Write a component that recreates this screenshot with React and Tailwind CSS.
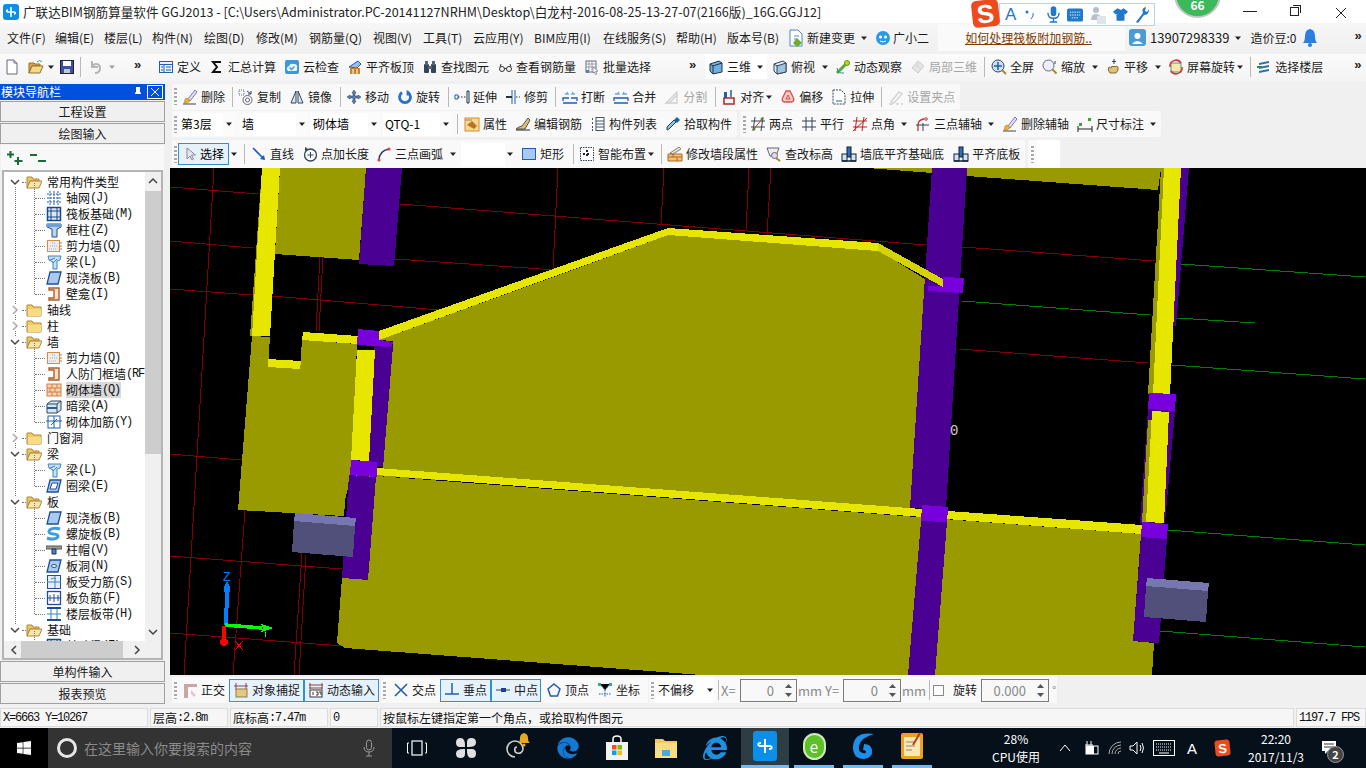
import { FaEdge, FaInternetExplorer, FaWindows } from 'react-icons/fa';

const B = '#1f5fae';
const LB = '#6aa5e0';
const O = '#d0762a';

const brush = <><path d="M6 10l7-9 2 2-7 9z" fill="#e4e0f0" stroke="#65a" strokeWidth=".8" /><path d="M3 10q2-2 4 0l1 2q-3 3-6 2z" fill="#e6b23c" stroke="#a8801e" strokeWidth=".5" /><path d="M1 15h13" stroke="#444" /></>;

const icons = {
  new: <><path d="M3 1h7l3 3v11H3z" fill="#fff" stroke="#667" /><path d="M10 1v3h3" fill="#dde" stroke="#667" /></>,
  open: <><path d="M1 4h5l1 1h5v2H4l-3 7z" fill="#d9a441" stroke="#96702a" /><path d="M4 7h11l-3 7H1z" fill="#f5d98a" stroke="#96702a" /><path d="M9 3q3-3 5 0" fill="none" stroke="#3a7" /></>,
  save: <><rect x="1.500" y="1.500" width="13" height="13" fill="#3f4fa8" stroke="#223" /><rect x="4" y="2" width="8" height="5" fill="#fff" /><rect x="5" y="10" width="6" height="4" fill="#bcc" /></>,
  undo: <path d="M5 2v6h6M5 8c3-5 8-3 8 1 0 3-2 5-5 5" fill="none" stroke="#b5b5b5" strokeWidth="2" />,
  define: <><rect x="1.500" y="2.500" width="13" height="11" fill="#eaf2fb" stroke={B} /><path d="M1.500 5.500h13M6 5.500v8M3 8h2M3 11h2M8 8h5M8 11h5" stroke={B} /></>,
  sigma: <path d="M12 3H4l4 5-4 5h8" fill="none" stroke="#111" strokeWidth="2" />,
  cloud: <><rect x="1" y="1" width="14" height="14" rx="2" fill="#3c97e0" /><path d="M4 12q-3-3 1-5 1-3 5-2 4 0 3 4 1 3-2 3z" fill="#e8f4fc" /><path d="M5.500 8.500l2 2 3-3" fill="none" stroke="#3c97e0" strokeWidth="1.300" /></>,
  level: <><path d="M2 8l9-6 3 3-4 4z" fill="#9cbedd" stroke={B} /><rect x="3" y="9" width="10" height="6" fill="#c9832e" /><path d="M6 10v5M10 10v5" stroke="#fff" /></>,
  find: <><rect x="2" y="5" width="5" height="9" rx="1" fill="#345" /><rect x="9" y="5" width="5" height="9" rx="1" fill="#345" /><rect x="3" y="2" width="3" height="4" fill="#567" /><rect x="10" y="2" width="3" height="4" fill="#567" /><rect x="6" y="7" width="4" height="3" fill="#567" /></>,
  glasses: <><circle cx="5" cy="10" r="2.500" fill="none" stroke="#333" /><circle cx="12" cy="10" r="2.500" fill="none" stroke="#333" /><path d="M7 9.500h2.500M3 8l1-3M14 8l-1-3" stroke="#333" /></>,
  batch: <><rect x="2" y="2" width="10" height="11" fill="#fff" stroke="#667" /><path d="M2 5h10M2 8h10M5 2v11M8 2v11" stroke="#99a" /><path d="M9 8l5 4-2.500.5L13 15l-1.500.5-1-2.500L9 14z" fill="#fff" stroke="#667" strokeWidth=".6" /><rect x="2" y="11" width="3" height="3" fill="#4a7fc0" /></>,
  cube: <><path d="M2 5l9-3 3 2v9l-9 2-3-3z" fill="#6fb0e0" stroke="#234" /><path d="M2 5l3 2 9-3M5 7v8" fill="none" stroke="#234" /></>,
  top: <><path d="M2 5l9-3 3 2v9l-9 2-3-3z" fill="#dcebf7" stroke="#345" /><path d="M5 7l9-3v9l-9 2z" fill="#9cc3e4" stroke="#345" /><path d="M2 5l3 2" stroke="#345" /></>,
  orbit: <><path d="M2 14L12 4" stroke="#5a3" strokeWidth="3" /><circle cx="12" cy="4" r="2.500" fill="#cc3" stroke="#690" /><path d="M2 9q1 6 7 5" fill="none" stroke="#38a" /></>,
  local3d: <><path d="M2 9l6-7 6 5-6 7z" fill="#ddd" stroke="#bbb" /><path d="M5 5l6 5M8 2v6" stroke="#c8c8c8" /></>,
  full: <><circle cx="7" cy="7" r="6" fill="#cfe0f3" stroke="#345" /><path d="M7 3v8M3 7h8" stroke={B} strokeWidth="1.500" /><path d="M11 11l4 4" stroke="#a82" strokeWidth="2" /></>,
  zoom: <><circle cx="6.500" cy="6.500" r="5.500" fill="#eef" stroke="#667" /><path d="M10.500 10.500l4 4" stroke="#a82" strokeWidth="2" /><path d="M13 2v3" stroke="#345" /></>,
  pan: <><path d="M4 8q-2 3 1 6h6q3-3 2-6l-2-1-1 1-1-1-1 1-1-1-1 2z" fill="#dfc07e" stroke="#8a6a2a" /><path d="M9 0v5M7 2.500h4" stroke="#345" /></>,
  rotScreen: <><rect x="3" y="4" width="10" height="9" fill="#f5e9a8" stroke="#49a" /><path d="M2 8a6 6 0 0 1 11-4M14 8a6 6 0 0 1-11 4" fill="none" stroke="#d33" strokeWidth="1.500" /></>,
  floor: <><path d="M3 4l10-2v2L3 6zM3 8l10-2v2L3 10zM3 12l10-2v2L3 14z" fill="#2a6fa8" /><path d="M1 8h5" stroke="#2a8a4a" strokeWidth="2" /></>,
  del: brush,
  copy: <><rect x="1" y="1" width="5" height="5" fill="none" stroke="#667" strokeDasharray="1 1" /><circle cx="9.500" cy="11" r="4.500" fill="none" stroke="#667" /><circle cx="9.500" cy="11" r="2" fill="none" stroke="#667" /><path d="M9 2l4 3M13 2v3h-3" fill="none" stroke="#345" /></>,
  mirror: <path d="M7 2v12H2zM9 2v12h5z" fill="#dce8f5" stroke="#345" />,
  move: <path d="M8 1l2 3H9v3h3V6l3 2-3 2V9H9v3h1l-2 3-2-3h1V9H4v1L1 8l3-2v1h3V4H6z" fill="#5580b0" stroke="#234" strokeWidth=".5" />,
  rotate: <path d="M5 3.500a5.500 5.500 0 1 0 6 0v3" fill="none" stroke="#2d6fc0" strokeWidth="2.800" />,
  extend: <><path d="M13 2h2v12h-2z" fill="none" stroke="#234" /><path d="M1 6h3v4H1z" fill="none" stroke={B} /><path d="M4 8h8" stroke="#234" strokeDasharray="1.500 1.500" /></>,
  trim: <><path d="M7 1v14M10 1v14" stroke={B} /><path d="M1 8h6" stroke="#234" strokeWidth="2" /><path d="M11 8h4" stroke="#234" strokeDasharray="1.500 1.500" /></>,
  break: <><path d="M1 12V9h6M15 12V9H9M1 14h14" fill="none" stroke={B} strokeWidth="1.300" /><path d="M3 5h3l-1-2M13 5h-3l1-2" fill="none" stroke={LB} strokeWidth="1.300" /></>,
  merge: <><path d="M1 12V9h14v3M1 14h14" fill="none" stroke={B} strokeWidth="1.300" /><path d="M2 5h4l-1-2M14 5h-4l1-2" fill="none" stroke={LB} strokeWidth="1.300" /></>,
  split: <path d="M2 14L13 3v11zM5 14l8-8" fill="none" stroke="#bdbdbd" strokeWidth="1.300" />,
  align: <><rect x="3" y="9" width="10" height="6" fill="none" stroke="#b22" strokeWidth="1.500" /><rect x="3" y="3" width="3" height="6" fill={B} /><path d="M10 1v7" stroke={B} strokeWidth="1.500" /></>,
  offset: <><path d="M4 13q-3-1-1-5l3-6h4l3 6q2 4-1 5z" fill="#f4c6c0" stroke="#c55" strokeWidth="1.300" /><path d="M6 10l2-4 2 4z" fill="none" stroke="#c55" /></>,
  stretch: <><path d="M2 1h8l4 4v10H2z" fill="#fff" stroke="#345" strokeDasharray="2 1" /><path d="M5 12h6" stroke={B} /></>,
  setgrip: <path d="M3 13L11 3l3 2-8 9zM1 15h4M8 15h3M13 15h2" fill="none" stroke="#c4c4c4" strokeWidth="1.400" />,
  prop: <><rect x="1" y="2" width="14" height="13" fill="#f7d98c" stroke="#d98a30" /><path d="M3 9l5-4 5 5-3 3z" fill="#b5762a" /><path d="M1 4h7" stroke="#888" /></>,
  editbar: <><path d="M1 13h9l5-9-2-2-6 8-3 1z" fill="#e0c070" stroke="#555" /><path d="M1 14h14" stroke="#222" /></>,
  list: <><path d="M2 3h2M2 7h2M2 11h2M2 14h2" stroke="#456" strokeDasharray="1 1" strokeWidth="2" /><rect x="6" y="1.500" width="8" height="13" fill="#fff" stroke="#456" /><path d="M6 5h8M6 8h8M6 11h8" stroke="#456" /></>,
  pick: <><path d="M2 14l2-1 7-7-2-2-7 7z" fill="#8cc0ee" stroke="#245" /><path d="M9 4l3-3 3 3-3 3z" fill="#1f5fae" /></>,
  two: <><path d="M5 1L3 15M13 1l-2 14M1 5h14M1 11h14" stroke="#345" /><circle cx="4" cy="13" r="1.500" fill="#3a3" /><circle cx="12" cy="3" r="1.500" fill="#3a3" /><path d="M3 14L13 2" stroke="#b33" /></>,
  parallel: <path d="M5 1v14M11 1v14M1 5h14M1 11h14" stroke="#345" />,
  angle: <path d="M5 1L3 15M12 1l-2 14M1 5h14M1 11h14M1 15L15 2" stroke="#b22" />,
  arc3: <><path d="M3 15V9q0-5 6-6" fill="none" stroke="#c33" strokeWidth="1.300" /><path d="M1 9h13M8 7v8" stroke="#345" /><circle cx="11" cy="3" r="1.300" fill="none" stroke="#c33" /></>,
  delaxis: brush,
  dim: <><path d="M1 13h14M1 10v6M15 10v6" stroke="#222" /><rect x="11" y="2" width="3" height="3" fill="#3a3" /><rect x="2" y="7" width="3" height="3" fill="#3a3" /></>,
  select: <path d="M5 2v11l3-3 2 4 1.500-1-2-4h4z" fill="#e8e8f2" stroke="#889" />,
  line: <><path d="M2 2l11 11" stroke={B} strokeWidth="1.600" /><path d="M14 14l-5-1 4-4z" fill={B} /></>,
  pointlen: <><circle cx="8.500" cy="9" r="6" fill="none" stroke="#345" strokeWidth="1.300" /><path d="M8.500 6v6M5.500 9h6" stroke="#345" /><path d="M3 1l3 2-3 2z" fill="#345" /></>,
  arc: <><path d="M3 14q0-9 10-11" fill="none" stroke="#336" strokeWidth="1.300" /><circle cx="3" cy="14" r="1.600" fill="#d44" /><circle cx="13" cy="3" r="1.600" fill="#d44" /></>,
  rect: <rect x="1.500" y="2.500" width="13" height="11" fill="#a9c9f0" stroke={B} />,
  smart: <><rect x="1.500" y="1.500" width="13" height="13" fill="#fff" stroke="#345" strokeDasharray="1.500 1" /><path d="M8 4v8M4 8h8" stroke="#222" strokeWidth="2" strokeDasharray="2 2" /></>,
  brick: <><path d="M1 15V8h14v7z" fill="#f2c078" stroke="#b5651d" /><path d="M1 11h14M6 8v3M10 11v4" stroke="#b5651d" /><path d="M3 7l9-6 2 2-8 5z" fill="#e8e0c8" stroke="#555" strokeWidth=".7" /></>,
  elev: <><path d="M1 2h12l-3 8H4z" fill="#eee" stroke="#667" /><path d="M10 12l4 3" stroke="#a82" strokeWidth="2" /><circle cx="8.500" cy="9.500" r="3" fill="#dde" stroke="#667" /></>,
  wallbase: <><rect x="6" y="1" width="4" height="10" fill="#2f6fc0" stroke="#123" /><rect x="1" y="8" width="5" height="7" fill="#cfe2f6" stroke="#123" /><rect x="10" y="8" width="5" height="7" fill="#cfe2f6" stroke="#123" /><path d="M1 15h14" stroke="#123" strokeWidth="1.500" /></>,
  ortho: <><path d="M2 2h13v3H6v11H2z" fill="#c9a5a5" /><path d="M9 8l5 5-2 2-3-3z" fill="#e4c8d0" /></>,
  snap: <><path d="M3 1v7M13 1v7M1 4h14" stroke="#845" /><rect x="3" y="7" width="11" height="8" fill="#e2c985" stroke="#9a7a3a" /></>,
  dyn: <><path d="M1 3h14M1 6h14M2 1v6M14 1v6" stroke="#844" /><rect x="2" y="8" width="12" height="7" fill="#fff" stroke="#333" /><path d="M5 10v3M8 10h2v3H8M11 10h2v3" stroke="#333" fill="none" /></>,
  cross: <path d="M2 2l12 12M14 2L2 14" stroke={B} strokeWidth="1.600" />,
  perp: <path d="M1 12h14M8 1v11" stroke={B} strokeWidth="1.500" />,
  mid: <><path d="M1 8h14" stroke="#345" /><rect x="6" y="6" width="5" height="4" fill="#1f3f9e" /></>,
  vertex: <path d="M8 2l6 5-2.500 7h-7L2 7z" fill="none" stroke={B} strokeWidth="1.500" />,
  coord: <><path d="M3 2l5 6 5-6M8 8v7M2 12h12" stroke={B} strokeDasharray="1.500 1" /><rect x="1" y="1" width="3" height="3" fill="#3a8" /><rect x="12" y="1" width="3" height="3" fill="#3a8" /></>,
  folder: <><path d="M1 3h5l1 2h8v9H1z" fill="#f4cf5f" stroke="#a98a3e" /><path d="M2 7h13v7H2z" fill="#f7dc84" /></>,
  folderOpen: <><path d="M1 3h5l1 2h6v2H4l-3 7z" fill="#e9c469" stroke="#a98a3e" /><path d="M4 7h12l-3 7H1z" fill="#f7e3a6" stroke="#a98a3e" /></>,
  grid: <path d="M1 4h14M1 8h14M1 12h14M4 1v14M8 1v14M12 1v14" stroke={B} strokeDasharray="2 1" />,
  raft: <><rect x="1.500" y="1.500" width="13" height="13" fill="#dbe9f7" stroke="#154a8c" strokeWidth="1.500" /><path d="M5 2v12M11 2v12M2 5h12M2 11h12" stroke="#154a8c" /></>,
  column: <><path d="M1 2h14v3l-4 2v8H6V7L1 5z" fill="#bcd4ef" stroke="#1e4f96" /><path d="M1 2h14v3H1z" fill="#6d9fd8" /></>,
  shear: <><rect x="1.500" y="2.500" width="12" height="11" fill="#ededed" stroke="#d88a4a" /><path d="M3 11h8M4 8h7M6 5h4" stroke="#aaa" strokeDasharray="1 1" /><path d="M14 5h2M14 8h2M14 11h2" stroke={O} /></>,
  beam: <><path d="M2 2h13l-1 4-3 1v8H7V8L3 6z" fill="#c7e0f5" stroke="#3a86c0" /><path d="M4 6l5-2M7 9l4-4" stroke="#3a86c0" /></>,
  slab: <path d="M4 2h11l-3 12H1z" fill="#a9c9f0" stroke="#1e4f96" strokeWidth="1.300" />,
  niche: <path d="M3 2h10v12H3v-2h5V4H3z" fill="#f6ddc8" stroke="#b0602a" strokeWidth="1.400" />,
  masonry: <><rect x="1" y="2" width="14" height="12" fill="#f6d4b4" stroke="#cf7f45" /><path d="M1 6h14M1 10h14M6 2v4M11 2v4M4 6v4M9 6v4M6 10v4M11 10v4" stroke="#cf7f45" /></>,
  hidden: <><path d="M1 6l4-3h10v9l-4 3H1z" fill="#d7e6f3" stroke="#345" /><path d="M1 6h10v9M11 6l4-3" fill="none" stroke="#345" /><rect x="1" y="9" width="10" height="2" fill="#2a5ea0" /></>,
  rebar: <><rect x="2" y="2" width="12" height="12" fill="#fff" stroke={B} /><path d="M0 7h16M8 2v12M5 11l6-6" stroke={B} /></>,
  ring: <><path d="M4 2h11l-3 12H1z" fill="#a9c9f0" stroke="#1e4f96" strokeWidth="1.300" /><path d="M6 5h6l-2 6H4z" fill="#fff" stroke="#1e4f96" /></>,
  spiral: <path d="M14 3C8 1 3 3 3 6s9 1 9 4-6 4-11 2" fill="none" stroke="#3d9be0" strokeWidth="3" />,
  cap: <><path d="M0 4h16v3H0z" fill="#999" stroke="#555" /><path d="M6 7h4v5H6z" fill="#4a86c6" stroke="#234" /></>,
  hole: <><path d="M4 2h11l-3 12H1z" fill="#a9c9f0" stroke="#1e4f96" strokeWidth="1.300" /><ellipse cx="8" cy="8" rx="2.500" ry="1.500" fill="#fff" stroke="#1e4f96" /></>,
  force: <><rect x="1.500" y="1.500" width="13" height="13" fill="#e3eefa" stroke="#1e4f96" /><path d="M1 8h14M9 2v12" stroke="#3a86c0" /><path d="M5 5q3-2 5 0" fill="none" stroke="#3a86c0" /></>,
  neg: <><rect x="1.500" y="1.500" width="13" height="13" fill="#fff" stroke="#1e4f96" strokeWidth="1.300" /><path d="M2 8h12M8 4v8M4 5v6M12 5v6" stroke="#1e4f96" /></>,
  band: <><path d="M1 2h14M1 14h14" stroke="#1e4f96" strokeWidth="2" /><path d="M5 3v10M11 3v10M1 8h14" stroke="#3a86c0" /></>,
};

function Icon({ name, cls = '' }) {
  return <svg width="16" height="16" viewBox="0 0 16 16" className={`shrink-0 ${cls}`}>{icons[name]}</svg>;
}

function Tool({ icon, label, cls = '', off = false }) {
  return (
    <div className={`flex items-center shrink-0 whitespace-nowrap ${off ? 'text-[#a6a6a6]' : 'text-[#1a1a1a]'} ${cls}`}>
      <Icon name={icon} cls={off ? 'opacity-70' : ''} />
      <span className="ml-[3px]">{label}</span>
    </div>
  );
}

function Caret({ cls = '' }) {
  return (
    <svg width="8" height="8" viewBox="0 0 8 8" className={`shrink-0 ${cls}`}>
      <path d="M1 2.500h6L4 6z" fill="#222" />
    </svg>
  );
}

const Sep = ({ cls = '' }) => <div className={`w-px h-[20px] bg-[#b9b9b9] shrink-0 ${cls}`} />;

const Grip = ({ cls = '' }) => (
  <div className={`w-[3px] h-[17px] shrink-0 bg-[repeating-linear-gradient(#a8a8a8_0_2px,transparent_2px_4px)] ${cls}`} />
);

const More = ({ cls = '' }) => <span className={`text-[13px] leading-none font-bold text-[#222] shrink-0 font-['Liberation_Sans',sans-serif] ${cls}`}>»</span>;

function Combo({ text, w, cls = '' }) {
  return (
    <div className={`flex items-center shrink-0 ${cls}`}>
      <div className={`h-[23px] bg-white flex items-center pl-[2px] whitespace-nowrap ${w}`}>{text}</div>
      <div className="w-[12px] h-[23px] bg-[#fbfbfb] flex items-center justify-center"><Caret /></div>
    </div>
  );
}

const menus = [
  ['文件(F)', 'w-[48px]'], ['编辑(E)', 'w-[49px]'], ['楼层(L)', 'w-[48px]'], ['构件(N)', 'w-[52px]'],
  ['绘图(D)', 'w-[52px]'], ['修改(M)', 'w-[53px]'], ['钢筋量(Q)', 'w-[64px]'], ['视图(V)', 'w-[50px]'],
  ['工具(T)', 'w-[50px]'], ['云应用(Y)', 'w-[61px]'], ['BIM应用(I)', 'w-[69px]'], ['在线服务(S)', 'w-[73px]'],
  ['帮助(H)', 'w-[51px]'], ['版本号(B)', 'w-[61px]'],
];

function TitleBar() {
  return (
    <div className="h-[23px] bg-white flex items-center relative shrink-0">
      <div className="ml-[3px] w-[16px] h-[16px] rounded-[3px] bg-[#0b8fe8] flex items-center justify-center">
        <svg width="12" height="12" viewBox="0 0 12 12"><path d="M6 1v10M2 6h8M2 6q-1-2 1-2M10 6q1 2-1 2" fill="none" stroke="#fff" strokeWidth="1.600" /></svg>
      </div>
      <span className="ml-[4px] text-[12.6px] leading-none whitespace-nowrap text-[#222] mt-[1px]">
        广联达BIM钢筋算量软件 GGJ2013 - [C:\Users\Administrator.PC-20141127NRHM\Desktop\白龙村-2016-08-25-13-27-07(2166版)_16G.GGJ12]
      </span>
      <div className="absolute left-[1243px] top-[11px] w-[14px] h-px bg-[#222]" />
      <div className="absolute left-[1290px] top-[7px] w-[9px] h-[9px] border border-[#222] bg-white">
        <div className="absolute -top-[3px] left-[2px] w-[8px] h-[8px] border-t border-r border-[#222]" />
      </div>
      <svg width="12" height="12" viewBox="0 0 12 12" className="absolute left-[1335px] top-[7px]"><path d="M1 1l10 10M11 1L1 11" stroke="#222" /></svg>
    </div>
  );
}

function MenuBar() {
  return (
    <div className="h-[31px] pb-[2px] bg-gradient-to-b from-[#f6f6f6] to-[#f0f0f0] flex items-center pl-[7px] text-[12px] leading-none text-[#1a1a1a] shrink-0">
      {menus.map(([t, w]) => <span key={t} className={`whitespace-nowrap shrink-0 ${w}`}>{t}</span>)}
      <div className="flex items-center shrink-0">
        <svg width="16" height="18" viewBox="0 0 16 18"><path d="M2 1h8l4 4v12H2z" fill="#fff" stroke="#4a86c6" /><path d="M6 7h5M6 10h3" stroke="#4a86c6" /><path d="M9 9l5 5-5 4-4-4z" fill="#6eaa2e" /></svg>
        <span className="ml-[3px] whitespace-nowrap">新建变更</span>
      </div>
      <Caret cls="ml-[5px]" />
      <svg width="16" height="16" viewBox="0 0 16 16" className="ml-[7px] shrink-0"><circle cx="8" cy="8" r="7" fill="#2a9be8" /><circle cx="5.500" cy="7" r="1.500" fill="#fff" /><circle cx="10.500" cy="7" r="1.500" fill="#fff" /><path d="M5 11q3 2 6 0" stroke="#fff" fill="none" /></svg>
      <span className="ml-[2px] w-[45px] whitespace-nowrap shrink-0">广小二</span>
      <div className="w-[187px] h-[27px] bg-[#fafafa] flex items-center justify-center shrink-0">
        <span className="underline text-[#7a3b00] whitespace-nowrap ml-[-6px]">如何处理筏板附加钢筋..</span>
      </div>
      <svg width="17" height="17" viewBox="0 0 17 17" className="ml-[4px] shrink-0"><rect width="17" height="17" rx="3" fill="#4d9bd5" /><circle cx="8.500" cy="7" r="3" fill="#fff" /><path d="M3 15q5-6 11 0z" fill="#fff" /></svg>
      <span className="ml-[4px] text-[13px] whitespace-nowrap">13907298339</span>
      <Caret cls="ml-[5px]" />
      <span className="ml-[8px] whitespace-nowrap">造价豆:0</span>
      <svg width="14" height="20" viewBox="0 0 14 20" className="ml-[7px] shrink-0"><path d="M7 1q5 1 5 7 0 5 2 7H0q2-2 2-7 0-6 5-7z" fill="#2a7fe0" /><circle cx="7" cy="17" r="2" fill="#2a7fe0" /></svg>
      <More cls="ml-[37px] -mt-[4px]" />
    </div>
  );
}

function MainToolbar() {
  return (
    <div className="h-[27px] pb-[2px] flex items-center text-[12px] leading-none shrink-0 bg-gradient-to-b from-[#fbfbfb] to-[#f4f4f4]">
      <div className="w-[152px] h-full flex items-center shrink-0">
        <Icon name="new" cls="ml-[4px]" />
        <Icon name="open" cls="ml-[8px]" />
        <Caret cls="ml-[3px]" />
        <Icon name="save" cls="ml-[4px]" />
        <Sep cls="ml-[5px]" />
        <Icon name="undo" cls="ml-[6px]" />
        <Caret cls="ml-[5px] opacity-40" />
        <More cls="ml-[18px] -mt-[4px]" />
      </div>
      <div className="ml-[1px] w-[537px] h-full flex items-center shrink-0 relative">
        <Tool icon="define" label="定义" cls="ml-[5px]" />
        <Tool icon="sigma" label="汇总计算" cls="ml-[8px]" />
        <Tool icon="cloud" label="云检查" cls="ml-[8px]" />
        <Tool icon="level" label="平齐板顶" cls="ml-[8px]" />
        <Tool icon="find" label="查找图元" cls="ml-[8px]" />
        <Tool icon="glasses" label="查看钢筋量" cls="ml-[8px]" />
        <Tool icon="batch" label="批量选择" cls="ml-[8px]" />
        <More cls="ml-[38px] -mt-[4px]" />
      </div>
      <div className="w-[676px] h-full flex items-center shrink-0 ml-[1px]">
        <div className="ml-[14px] pl-[3px] pr-[3px] flex items-center bg-white h-[25px] shrink-0">
          <Tool icon="cube" label="三维" />
          <Caret cls="ml-[5px]" />
        </div>
        <Tool icon="top" label="俯视" cls="ml-[5px]" />
        <Caret cls="ml-[6px]" />
        <Tool icon="orbit" label="动态观察" cls="ml-[6px]" />
        <Tool icon="local3d" label="局部三维" cls="ml-[8px]" off />
        <Sep cls="ml-[7px]" />
        <Tool icon="full" label="全屏" cls="ml-[6px]" />
        <Tool icon="zoom" label="缩放" cls="ml-[8px]" />
        <Caret cls="ml-[6px]" />
        <Tool icon="pan" label="平移" cls="ml-[6px]" />
        <Caret cls="ml-[6px]" />
        <Tool icon="rotScreen" label="屏幕旋转" cls="ml-[6px]" />
        <Caret cls="ml-[1px]" />
        <Sep cls="ml-[6px]" />
        <Tool icon="floor" label="选择楼层" cls="ml-[5px]" />
        <More cls="ml-[31px] -mt-[4px]" />
      </div>
    </div>
  );
}

function EditRow() {
  return (
    <div className="h-[26px] mt-[3px] pb-[1px] ml-[2px] w-[788px] rounded-[2px] bg-[#f9f9f9] flex items-center shrink-0">
      <Grip cls="ml-[2px]" />
      <Tool icon="del" label="删除" cls="ml-[5px]" />
      <Sep cls="ml-[7px]" />
      <Tool icon="copy" label="复制" cls="ml-[5px]" />
      <Tool icon="mirror" label="镜像" cls="ml-[8px]" />
      <Sep cls="ml-[8px]" />
      <Tool icon="move" label="移动" cls="ml-[5px]" />
      <Tool icon="rotate" label="旋转" cls="ml-[8px]" />
      <Sep cls="ml-[8px]" />
      <Tool icon="extend" label="延伸" cls="ml-[5px]" />
      <Tool icon="trim" label="修剪" cls="ml-[8px]" />
      <Sep cls="ml-[7px]" />
      <Tool icon="break" label="打断" cls="ml-[6px]" />
      <Tool icon="merge" label="合并" cls="ml-[8px]" />
      <Tool icon="split" label="分割" cls="ml-[8px]" off />
      <Sep cls="ml-[8px]" />
      <Tool icon="align" label="对齐" cls="ml-[5px]" />
      <Caret cls="ml-[1px]" />
      <Tool icon="offset" label="偏移" cls="ml-[7px]" />
      <Tool icon="stretch" label="拉伸" cls="ml-[8px]" />
      <Sep cls="ml-[7px]" />
      <Tool icon="setgrip" label="设置夹点" cls="ml-[6px]" off />
    </div>
  );
}

function ComponentRow() {
  return (
    <div className="h-[26px] mt-[1px] flex items-center shrink-0">
      <div className="ml-[2px] w-[565px] h-full rounded-[2px] bg-[#f9f9f9] flex items-center shrink-0">
        <Grip cls="ml-[2px]" />
        <Combo text="第3层" w="w-[44px]" cls="ml-[2px]" />
        <Combo text="墙" w="w-[56px]" cls="ml-[5px]" />
        <Combo text="砌体墙" w="w-[57px]" cls="ml-[3px]" />
        <Combo text="QTQ-1" w="w-[57px]" cls="ml-[3px]" />
        <Sep cls="ml-[5px]" />
        <Tool icon="prop" label="属性" cls="ml-[6px]" />
        <Tool icon="editbar" label="编辑钢筋" cls="ml-[8px]" />
        <Tool icon="list" label="构件列表" cls="ml-[8px]" />
        <Tool icon="pick" label="拾取构件" cls="ml-[8px]" />
      </div>
      <div className="ml-[3px] w-[421px] h-full rounded-[2px] bg-[#f9f9f9] flex items-center shrink-0">
        <Grip cls="ml-[3px]" />
        <Tool icon="two" label="两点" cls="ml-[4px]" />
        <Tool icon="parallel" label="平行" cls="ml-[8px]" />
        <Tool icon="angle" label="点角" cls="ml-[8px]" />
        <Caret cls="ml-[5px]" />
        <Tool icon="arc3" label="三点辅轴" cls="ml-[7px]" />
        <Caret cls="ml-[5px]" />
        <Tool icon="delaxis" label="删除辅轴" cls="ml-[7px]" />
        <Tool icon="dim" label="尺寸标注" cls="ml-[8px]" />
        <Caret cls="ml-[5px]" />
      </div>
    </div>
  );
}

function DrawRow() {
  return (
    <div className="h-[28px] mt-[3px] flex items-center shrink-0">
      <div className="ml-[2px] w-[853px] h-full rounded-[2px] bg-[#f9f9f9] flex items-center shrink-0">
        <Grip cls="ml-[2px]" />
        <div className="ml-[1px] w-[51px] h-[22px] border border-[#2f8fd8] bg-[#e5f1fb] flex items-center pl-[3px] shrink-0 whitespace-nowrap">
          <Icon name="select" /><span className="ml-[2px]">选择</span>
        </div>
        <Caret cls="ml-[1px]" />
        <Sep cls="ml-[6px]" />
        <Tool icon="line" label="直线" cls="ml-[6px]" />
        <Tool icon="pointlen" label="点加长度" cls="ml-[8px]" />
        <Tool icon="arc" label="三点画弧" cls="ml-[7px]" />
        <Caret cls="ml-[6px]" />
        <div className="ml-[4px] w-[44px] h-[23px] bg-white shrink-0" />
        <Caret cls="ml-[1px]" />
        <Tool icon="rect" label="矩形" cls="ml-[7px]" />
        <Sep cls="ml-[9px]" />
        <Tool icon="smart" label="智能布置" cls="ml-[5px]" />
        <Caret cls="ml-[1px]" />
        <Sep cls="ml-[6px]" />
        <Tool icon="brick" label="修改墙段属性" cls="ml-[5px]" />
        <Tool icon="elev" label="查改标高" cls="ml-[8px]" />
        <Tool icon="wallbase" label="墙底平齐基础底" cls="ml-[8px]" />
        <Tool icon="wallbase" label="平齐底板" cls="ml-[9px]" />
      </div>
      <div className="ml-[3px] h-full rounded-[2px] bg-[#f9f9f9] flex items-center shrink-0">
        <Grip cls="ml-[3px]" />
        <div className="ml-[3px] w-[23px] h-full bg-white" />
      </div>
    </div>
  );
}

function Num({ value, w }) {
  return (
    <div className={`h-[23px] border border-[#7a7a7a] bg-[#f8f8f8] flex items-center justify-end text-[#888] text-[13px] shrink-0 ${w}`}>
      <span>{value}</span>
      <div className="w-[16px] ml-[6px] flex flex-col items-center gap-[5px] shrink-0">
        <svg width="7" height="4" viewBox="0 0 7 4"><path d="M0 4l3.500-4L7 4z" fill="#555" /></svg>
        <svg width="7" height="4" viewBox="0 0 7 4"><path d="M0 0l3.500 4L7 0z" fill="#555" /></svg>
      </div>
    </div>
  );
}

function SnapRow() {
  const on = 'h-[23px] border border-[#2f8fd8] bg-[#e5f1fb] flex items-center pl-[3px] shrink-0';
  return (
    <div className="h-[29px] mt-[2px] pb-[3px] flex items-center shrink-0">
      <div className="ml-[2px] w-[208px] h-full flex items-center shrink-0 bg-[#f9f9f9]">
        <Grip cls="ml-[2px]" />
        <Tool icon="ortho" label="正交" cls="ml-[5px]" />
        <div className={`ml-[4px] w-[75px] ${on}`}><Tool icon="snap" label="对象捕捉" /></div>
        <div className={`w-[75px] ${on}`}><Tool icon="dyn" label="动态输入" /></div>
      </div>
      <div className="ml-[1px] w-[267px] h-full flex items-center shrink-0 bg-[#f9f9f9]">
        <Grip cls="ml-[2px]" />
        <Tool icon="cross" label="交点" cls="ml-[7px]" />
        <div className={`ml-[4px] w-[51px] ${on}`}><Tool icon="perp" label="垂点" /></div>
        <div className={`w-[50px] ${on}`}><Tool icon="mid" label="中点" /></div>
        <Tool icon="vertex" label="顶点" cls="ml-[5px]" />
        <Tool icon="coord" label="坐标" cls="ml-[8px]" />
      </div>
      <div className="ml-[1px] w-[408px] h-full flex items-center shrink-0 text-[#1a1a1a] bg-[#f9f9f9]">
        <Grip cls="ml-[2px]" />
        <div className="ml-[2px] w-[58px] h-[26px] bg-white flex items-center pl-[2px] whitespace-nowrap shrink-0">
          不偏移<Caret cls="ml-[12px]" />
        </div>
        <Sep cls="ml-[4px]" />
        <span className="ml-[2px] w-[19px] text-[#888] text-[13px] shrink-0">X=</span>
        <Num value="0" w="w-[57px]" />
        <span className="ml-[1px] w-[27px] text-[#888] text-[13px] shrink-0">mm</span>
        <span className="w-[18px] text-[#888] text-[13px] shrink-0">Y=</span>
        <Num value="0" w="w-[58px]" />
        <span className="ml-[1px] w-[26px] text-[#888] text-[13px] shrink-0">mm</span>
        <Sep cls="ml-[1px]" />
        <div className="ml-[3px] w-[11px] h-[11px] border border-[#888] bg-white shrink-0" />
        <span className="ml-[9px] w-[28px] shrink-0">旋转</span>
        <Num value="0.000" w="w-[68px]" />
        <span className="ml-[3px] text-[#888] shrink-0">°</span>
      </div>
    </div>
  );
}

const Y = '#e6e600';
const YD = '#d4d400';
const OL = '#999900';
const P = '#4b0094';
const PB = '#7700dd';

const redLines = [
  [170, 187, 258, 194], [400, 204, 926, 245], [170, 241, 253, 248], [395, 259, 557, 270],
  [170, 289, 252, 295], [272, 296, 440, 310], [170, 454, 242, 460], [170, 556, 342, 569], [170, 633, 343, 646],
  [214, 168, 184, 675], [558, 168, 553, 270], [664, 168, 661, 225], [749, 168, 746, 231], [771, 168, 767, 235],
  [320, 256, 316, 331], [323, 256, 319, 331], [245, 510, 233, 675],
  [302, 553, 294, 675], [306, 555, 299, 675], [962, 247, 1155, 261], [959, 349, 1148, 363],
];
const greenLines = [
  [1181, 264, 1365, 277], [962, 301, 1150, 315], [1177, 318, 1255, 323], [1172, 365, 1365, 379],
  [1168, 530, 1365, 545], [1160, 631, 1365, 647],
];

const polys = [
  [OL, '270,168 262,168 250,336 258,336'],
  [Y, '262,168 280,168 270,336 252,336'],
  [OL, '280,168 366,168 359,260 275,254'],
  [P, '366,168 402,168 394,266 359,264'],
  [OL, '252,336 270,337 268,367 300,369 302,340 357,344 344,516 238,510'],
  [Y, '303,332 358,336 358,344 302,340'],
  [Y, '268,359 301,361 300,369 268,367'],
  [OL, '393,341 379,340 570,271 668,235 878,250 928,281 911,510 376,476 383,468'],
  [OL, '350,474 1141,534 1133,641 1154,643 1152,675 702,675 345,648 337,643'],
  [OL, '868,168 932,168 932,173'],
  [OL, '967,168 1161,168 1158,190 967,176'],
  [Y, '379,331 668,228 878,243 878,251 668,235 379,340'],
  [Y, '377,468 922,509 922,517 376,475'],
  [Y, '948,511 1142,525 1141,534 947,519'],
  [P, '932,168 967,168 946,508 910,508'],
  [P, '921,521 947,522 935,675 908,675'],
  [PB, '928,286 943,286 943,277 964,278 963,293 928,291'],
  [YD, '878,243 943,279 943,287 878,251'],
  [PB, '922,505 948,507 947,522 921,521'],
  [P, '374,346 393,346 383,468 369,462'],
  [OL, '357,345 353,345 345,500 351,475'],
  [Y, '357,350 375,350 369,461 351,460'],
  [PB, '358,329 379,331 379,340 393,342 392,347 357,345'],
  [PB, '351,460 377,462 377,477 350,475'],
  [P, '349,475 376,477 368,580 342,578'],
  ['#7777b0', '295,513 356,518 355,526 294,521'],
  ['#50507a', '294,521 355,526 353,557 292,552'],
  [P, '1181,168 1189,168 1176,326 1173,326'],
  [OL, '1161,168 1164,168 1153,394 1148,394'],
  [Y, '1164,168 1181,168 1170,394 1153,394'],
  [P, '1148,409 1175,411 1165,523 1140,523'],
  [OL, '1148,420 1152,420 1146,522 1142,522'],
  [Y, '1152,411 1169,412 1164,523 1146,522'],
  [PB, '1149,393 1176,394 1175,411 1148,409'],
  [PB, '1142,522 1168,524 1167,539 1141,537'],
  [P, '1141,537 1167,539 1159,643 1133,641'],
  ['#7777b0', '1147,578 1209,583 1208,591 1146,586'],
  ['#50507a', '1146,586 1208,591 1206,622 1144,617'],
];

function Canvas() {
  return (
    <svg viewBox="170 168 1196 507" width="1196" height="507" shapeRendering="crispEdges" className="block shrink-0 bg-black">
      {redLines.map(([a, b, c, d], i) => <line key={i} x1={a} y1={b} x2={c} y2={d} stroke="#800000" />)}
      {greenLines.map(([a, b, c, d], i) => <line key={i} x1={a} y1={b} x2={c} y2={d} stroke="#008000" />)}
      {polys.map(([f, p], i) => <polygon key={i} points={p} fill={f} />)}
      <text x="950" y="435" fontSize="14" fill="#cfcfcf" fontFamily="Liberation Mono, monospace">0</text>
      <line x1="226" y1="625" x2="227" y2="592" stroke="#0080ff" strokeWidth="4" />
      <path d="M227 581l3 6v5h-6v-5z" fill="#0080ff" />
      <text x="223" y="581" fontSize="12" fill="#0080ff" fontFamily="Liberation Sans, sans-serif">Z</text>
      <line x1="225" y1="625" x2="262" y2="628" stroke="#00ff00" strokeWidth="3.500" />
      <path d="M273 628l-12 4 2-4-2-4z" fill="#00ff00" />
      <line x1="265" y1="632" x2="265" y2="637" stroke="#00ff00" />
      <line x1="224" y1="626" x2="224" y2="640" stroke="#ff0000" strokeWidth="4" />
      <circle cx="224" cy="642" r="4" fill="#ff0000" />
      <path d="M235 641l8 9M243 641l-8 9" stroke="#ff0000" />
    </svg>
  );
}

const tree = [
  { t: '常用构件类型', open: true, kids: [['grid', '轴网', 'J'], ['raft', '筏板基础', 'M'], ['column', '框柱', 'Z'], ['shear', '剪力墙', 'Q'], ['beam', '梁', 'L'], ['slab', '现浇板', 'B'], ['niche', '壁龛', 'I']] },
  { t: '轴线' },
  { t: '柱' },
  { t: '墙', open: true, kids: [['shear', '剪力墙', 'Q'], ['niche', '人防门框墙', 'RF'], ['masonry', '砌体墙', 'Q', true], ['hidden', '暗梁', 'A'], ['rebar', '砌体加筋', 'Y']] },
  { t: '门窗洞' },
  { t: '梁', open: true, kids: [['beam', '梁', 'L'], ['ring', '圈梁', 'E']] },
  { t: '板', open: true, kids: [['slab', '现浇板', 'B'], ['spiral', '螺旋板', 'B'], ['cap', '柱帽', 'V'], ['hole', '板洞', 'N'], ['force', '板受力筋', 'S'], ['neg', '板负筋', 'F'], ['band', '楼层板带', 'H']] },
  { t: '基础', open: true, kids: [['raft', '基础梁', 'F']] },
];

const mono = "font-['Liberation_Mono',monospace] text-[12px] tracking-[-1.2px]";

function TreeNode({ node, last }) {
  return (
    <div className="relative">
      {!last && <div className="absolute left-[11px] top-[8px] bottom-[-8px] border-l border-dotted border-[#777]" />}
      <div className="h-[16px] flex items-center relative">
        <svg width="10" height="10" viewBox="0 0 10 10" className="ml-[6px] shrink-0 relative bg-white">
          {node.open
            ? <path d="M1 3l4 4 4-4" fill="none" stroke="#444" strokeWidth="1.500" />
            : <path d="M3 1l4 4-4 4" fill="none" stroke="#aaa" strokeWidth="1.500" />}
        </svg>
        <div className="w-[4px] ml-[2px] border-t border-dotted border-[#777] shrink-0" />
        <Icon name={node.open ? 'folderOpen' : 'folder'} />
        <span className="ml-[5px] whitespace-nowrap">{node.t}</span>
      </div>
      {node.kids && (
        <div className="relative">
          <div className="absolute left-[30px] top-[-7px] bottom-[8px] border-l border-dotted border-[#777]" />
          {node.kids.map(([ic, t, k, sel]) => (
            <div key={t + k} className="h-[16px] flex items-center relative">
              <div className="ml-[31px] w-[10px] border-t border-dotted border-[#777] shrink-0" />
              <Icon name={ic} cls="ml-[1px] mr-[4px]" />
              <span className={`whitespace-nowrap pr-[1px] h-[16px] flex items-center ${sel ? 'bg-[#d9d9d9]' : ''}`}>
                {t}<span className={mono}>({k}{k === 'RF' ? '' : ')'}</span>
              </span>
            </div>
          ))}
        </div>
      )}
    </div>
  );
}

function Arrow({ d }) {
  return <svg width="10" height="10" viewBox="0 0 10 10" className="shrink-0"><path d={d} fill="none" stroke="#444" strokeWidth="1.500" /></svg>;
}

function NavPanel() {
  const btn = 'h-[21px] border border-[#a0a0a0] bg-[#f0f0f0] flex items-center justify-center text-[#1a1a1a] shrink-0 mb-[1px]';
  return (
    <div className="w-[170px] h-[622px] mt-[3px] shrink-0 text-[12px] leading-none flex flex-col">
      <div className="w-[165px] flex flex-col">
        <div className="h-[16px] bg-[#0050e0] text-white flex items-center pl-[1px] relative shrink-0 mb-[1px]">
          <span>模块导航栏</span>
          <svg width="10" height="12" viewBox="0 0 10 12" className="ml-[72px] shrink-0"><path d="M3 1h4v5l1 1v1H2V7l1-1zM5 8v4" fill="#fff" /></svg>
          <div className="ml-[4px] w-[16px] h-[14px] border border-white flex items-center justify-center">
            <svg width="8" height="8" viewBox="0 0 8 8"><path d="M0 0l8 8M8 0L0 8" stroke="#fff" /></svg>
          </div>
        </div>
        <div className={btn}>工程设置</div>
        <div className={btn}>绘图输入</div>
        <div className="h-[25px] mx-[1px] flex items-center bg-[#f8f8f8] shrink-0">
          <svg width="40" height="16" viewBox="0 0 40 16" className="ml-[6px]">
            <path d="M3.500 1v7M0 4.500h7M11 7v8M7.500 11h8" stroke="#1a6a3a" strokeWidth="2" />
            <path d="M23 5h7M31 11h8" stroke="#1a6a3a" strokeWidth="2" />
          </svg>
        </div>
        <div className="h-[490px] mx-[2px] border-2 border-[#b4b4b4] bg-white flex flex-col shrink-0">
          <div className="flex flex-1 min-h-0">
            <div className="flex-1 min-w-0 overflow-hidden pt-[2px] text-[#111]">
              {tree.map((n, i) => <TreeNode key={n.t} node={n} last={i === tree.length - 1} />)}
            </div>
            <div className="w-[16px] bg-[#f0f0f0] flex flex-col items-center shrink-0 pt-[4px]">
              <Arrow d="M1 7l4-4 4 4" />
              <div className="w-full h-[263px] bg-[#cdcdcd] mt-[5px] shrink-0" />
              <div className="flex-1" />
              <Arrow d="M1 3l4 4 4-4" />
              <div className="h-[4px]" />
            </div>
          </div>
          <div className="h-[17px] bg-[#f0f0f0] flex items-center shrink-0">
            <div className="ml-[5px]"><Arrow d="M7 1L3 5l4 4" /></div>
            <div className="ml-[2px] w-[102px] h-full bg-[#cdcdcd]" />
            <div className="ml-[9px]"><Arrow d="M3 1l4 4-4 4" /></div>
          </div>
        </div>
        <div className={`${btn} mt-[1px]`}>单构件输入</div>
        <div className={btn}>报表预览</div>
      </div>
    </div>
  );
}

function StatusBar() {
  const seg = 'h-[19px] border border-[#dcdcdc] bg-[#f6f6f6] flex items-center pl-[2px] shrink-0 whitespace-nowrap';
  return (
    <div className="h-[22px] pt-[2px] flex items-start text-[12px] leading-none text-[#111] shrink-0 gap-[2px]">
      <div className={`${seg} w-[148px] ${mono}`}>X=6663 Y=10267</div>
      <div className={`${seg} w-[78px]`}>层高<span className={mono}>:2.8m</span></div>
      <div className={`${seg} w-[98px]`}>底标高<span className={mono}>:7.47m</span></div>
      <div className={`${seg} w-[48px] ${mono}`}>0</div>
      <div className={`${seg} w-[914px]`}>按鼠标左键指定第一个角点，或拾取构件图元</div>
      <div className={`${seg} w-[70px] ${mono}`}>1197.7 FPS</div>
    </div>
  );
}

function Task({ children, cls = 'w-[49px]', under = false }) {
  return (
    <div className={`h-[40px] flex items-center justify-center relative shrink-0 ${cls}`}>
      {children}
      {under && <div className="absolute bottom-0 left-0 right-0 h-[3px] bg-[#76b9ed]" />}
    </div>
  );
}

function Taskbar() {
  return (
    <div className="h-[40px] bg-[#05101a] flex items-center text-white shrink-0 leading-none">
      <div className="w-[48px] h-full bg-black flex items-center justify-center shrink-0">
        <FaWindows size={16} color="#fff" />
      </div>
      <div className="w-[344px] h-full bg-[#333333] flex items-center shrink-0">
        <div className="ml-[9px] w-[20px] h-[20px] rounded-full border-[3px] border-[#e6e6e6] shrink-0" />
        <span className="ml-[7px] text-[14px] text-[#8a8a8a] whitespace-nowrap">在这里输入你要搜索的内容</span>
        <svg width="12" height="18" viewBox="0 0 12 18" className="ml-[111px] shrink-0"><rect x="3.500" y="1" width="5" height="10" rx="2.500" fill="none" stroke="#999" /><path d="M1 8q0 5 5 5t5-5M6 13v4M3 17h6" fill="none" stroke="#999" /></svg>
      </div>
      <Task><svg width="20" height="16" viewBox="0 0 20 16"><rect x="5" y="1" width="10" height="14" fill="none" stroke="#fff" strokeWidth="1.200" /><path d="M2 3H0.500v10H2M18 3h1.500v10H18" fill="none" stroke="#fff" /></svg></Task>
      <Task>
        <svg width="22" height="22" viewBox="0 0 22 22"><g fill="#e0e0e0"><path d="M10 10H5Q1 10 1 5.500T5.500 1q5 0 4.500 9z" /><path d="M12 10V5q0-4 4.500-4T21 5.500q0 5-9 4.500z" /><path d="M12 12h5q4 0 4 4.500T16.500 21q-5 0-4.500-9z" /><path d="M10 12v5q0 4-4.500 4T1 16.500q0-5 9-4.500z" /></g></svg>
      </Task>
      <Task>
        <div className="relative">
          <svg width="20" height="22" viewBox="0 0 20 22"><path d="M10 20a8 8 0 1 1 8-8c0 3-3 5-6 4s-3-6 0-6" fill="none" stroke="#cfcfcf" strokeWidth="1.600" /></svg>
          <svg width="14" height="15" viewBox="0 0 14 15" className="absolute -top-[5px] left-[12px]"><path d="M7 1q4 1 4 5 0 4 2 5H1q2-1 2-5 0-4 4-5z" fill="#e8a920" /><circle cx="7" cy="13" r="1.500" fill="#e8a920" /></svg>
        </div>
      </Task>
      <Task cls="ml-[4px] w-[49px]"><FaEdge size={22} color="#1478d4" /></Task>
      <Task>
        <svg width="24" height="26" viewBox="0 0 24 26"><path d="M8 7V4q0-3 4-3t4 3v3" fill="none" stroke="#fff" strokeWidth="1.500" /><rect x="1" y="7" width="22" height="18" fill="#f2f2f2" /><rect x="7" y="10" width="4.500" height="4.500" fill="#f25022" /><rect x="12.500" y="10" width="4.500" height="4.500" fill="#7fba00" /><rect x="7" y="15.500" width="4.500" height="4.500" fill="#00a4ef" /><rect x="12.500" y="15.500" width="4.500" height="4.500" fill="#ffb900" /></svg>
      </Task>
      <Task>
        <svg width="24" height="22" viewBox="0 0 24 22"><path d="M1 2h8l2 2h12v17H1z" fill="#f0c95a" /><rect x="1" y="6" width="22" height="15" fill="#f8dd84" /><rect x="8" y="13" width="8" height="6" fill="#4aa8e0" /></svg>
      </Task>
      <Task cls="w-[49px]"><FaInternetExplorer size={24} color="#1e90e0" /></Task>
      <Task cls="ml-[2px] w-[48px] bg-[#2e3c43]" under>
        <div className="w-[24px] h-[30px] rounded-[3px] bg-[#0b8fe8] flex items-center justify-center -mt-[4px]">
          <svg width="18" height="18" viewBox="0 0 18 18"><path d="M9 2v14M3 9h12M3 9q-2-3 2-3M15 9q2 3-2 3" fill="none" stroke="#fff" strokeWidth="2" /></svg>
        </div>
      </Task>
      <Task cls="ml-[5px] w-[40px]" under>
        <div className="w-[23px] h-[27px] rounded-full bg-[#5fc02a] border-2 border-[#d0e8c0] flex items-center justify-center text-[15px] -mt-[4px]">e</div>
      </Task>
      <Task cls="ml-[9px] w-[40px]" under>
        <svg width="26" height="30" viewBox="0 0 26 30" className="-mt-[4px]"><path d="M24 3Q4 0 3 16q0 12 11 12 9-1 8-9-1-6-8-6l-1 6q3 0 3 2 0 2-3 1-5-1-4-7 1-8 15-12z" fill="#1e8fe8" /></svg>
      </Task>
      <Task cls="ml-[9px] w-[40px]" under>
        <svg width="24" height="30" viewBox="0 0 24 30" className="-mt-[4px]"><rect x="1" y="2" width="22" height="26" rx="2" fill="#f0a020" /><rect x="4" y="6" width="16" height="19" fill="#fbe7b0" /><path d="M6 11h9M6 15h9M6 19h6" stroke="#888" /><path d="M20 2l-7 12" stroke="#b5451d" strokeWidth="2" /></svg>
      </Task>
      <div className="ml-[58px] w-[52px] flex flex-col items-center gap-[6px] text-[12px] shrink-0 whitespace-nowrap -mt-[1px]">
        <span>28%</span>
        <span>CPU使用</span>
      </div>
      <svg width="12" height="8" viewBox="0 0 12 8" className="ml-[17px] shrink-0"><path d="M1 7l5-6 5 6" fill="none" stroke="#fff" /></svg>
      <svg width="16" height="16" viewBox="0 0 16 16" className="ml-[12px] shrink-0"><rect x="3" y="6" width="12" height="8" fill="none" stroke="#fff" /><rect x="3" y="6" width="8" height="8" fill="#fff" /><path d="M4 1v4M8 1v4M2 5h8" stroke="#fff" /></svg>
      <svg width="16" height="14" viewBox="0 0 16 14" className="ml-[9px] shrink-0"><path d="M1 13A12 12 0 0 1 13 1M4 13a9 9 0 0 1 9-9M7 13a6 6 0 0 1 6-6M10 13a3 3 0 0 1 3-3" fill="none" stroke="#aaa" /></svg>
      <svg width="16" height="16" viewBox="0 0 16 16" className="ml-[5px] shrink-0"><path d="M1 6h3l4-4v12l-4-4H1zM11 5q2 3 0 6M13 3q3 5 0 10" fill="none" stroke="#fff" /></svg>
      <svg width="22" height="16" viewBox="0 0 22 16" className="ml-[8px] shrink-0"><rect x=".5" y=".5" width="21" height="15" fill="none" stroke="#fff" /><path d="M3 4h16M3 7h16M3 10h16" stroke="#fff" strokeDasharray="1 1" /><path d="M6 13h10" stroke="#fff" /></svg>
      <span className="ml-[12px] text-[15px] font-['Liberation_Sans',sans-serif] shrink-0">A</span>
      <div className="ml-[18px] w-[15px] h-[16px] rounded-[3px] bg-[#ee4a1e] flex items-center justify-center text-[13px] font-bold font-['Liberation_Sans',sans-serif] shrink-0 -rotate-6">S</div>
      <div className="ml-[15px] w-[62px] flex flex-col items-center gap-[6px] text-[12px] whitespace-nowrap shrink-0 -mt-[1px]">
        <span>22:20</span>
        <span>2017/11/3</span>
      </div>
      <div className="ml-[14px] relative shrink-0">
        <svg width="16" height="16" viewBox="0 0 16 16"><path d="M1 1h14v10H7l-3 3v-3H1z" fill="#fff" /><path d="M3 4h10M3 7h10" stroke="#333" /></svg>
        <div className="absolute left-[6px] top-[6px] w-[17px] h-[17px] rounded-full bg-[#444] border border-[#999] flex items-center justify-center text-[11px] font-bold">2</div>
      </div>
    </div>
  );
}

function Overlays() {
  return (
    <>
      <div className="absolute left-[1174px] top-[-29px] w-[47px] h-[47px] rounded-full bg-[#3cb95a] border-2 border-[#c4c4c4] flex items-end justify-center pb-[5px] text-white text-[12px] font-bold leading-none">66</div>
      <div className="absolute left-[999px] top-[3px] w-[156px] h-[23px] bg-white border border-[#b8d4ec] flex items-center text-[#1f78c8]">
        <span className="ml-[5px] text-[17px] leading-none font-['Liberation_Sans',sans-serif]">A</span>
        <svg width="10" height="12" viewBox="0 0 10 12" className="ml-[9px] shrink-0"><circle cx="2" cy="3" r="1.500" fill="#1f78c8" /><path d="M8 4q1 3-2 6" stroke="#1f78c8" fill="none" /></svg>
        <svg width="13" height="19" viewBox="0 0 14 20" className="ml-[12px] shrink-0"><rect x="4" y="1" width="6" height="11" rx="3" fill="#1f78c8" /><path d="M1 8q0 6 6 6t6-6M7 14v4M3 18h8" fill="none" stroke="#1f78c8" strokeWidth="1.500" /></svg>
        <svg width="16" height="14" viewBox="0 0 17 14" className="ml-[7px] shrink-0"><rect width="17" height="14" rx="2" fill="#1f78c8" /><path d="M3 4h11M3 7h11M5 10h7" stroke="#fff" strokeDasharray="1.500 1" /></svg>
        <svg width="16" height="18" viewBox="0 0 16 18" className="ml-[7px] shrink-0"><circle cx="6" cy="4" r="3" fill="#b5c0c8" /><path d="M1 14q0-6 5-6t5 6z" fill="#b5c0c8" /><rect x="7" y="10" width="9" height="8" fill="#dfe5ea" /></svg>
        <svg width="15" height="15" viewBox="0 0 17 16" className="ml-[7px] shrink-0"><path d="M5 1L0 5l3 3 1-1v8h9V7l1 1 3-3-5-4-3 2z" fill="#1f78c8" /></svg>
        <svg width="15" height="18" viewBox="0 0 15 18" className="ml-[6px] shrink-0"><path d="M2 16L9 7q-2-5 3-6l-1 4 2 1 2-3q0 6-5 6l-6 8z" fill="#1f78c8" /></svg>
      </div>
      <div className="absolute left-[972px] top-[0px] w-[27px] h-[27px] rounded-[5px] bg-[#ee4a1e] -rotate-6 flex items-center justify-center text-white text-[26px] leading-none font-bold font-['Liberation_Sans',sans-serif]">S</div>
    </>
  );
}

export default function App() {
  return (
    <div className="w-[1366px] h-[768px] overflow-hidden relative bg-[#f0f0f0] flex flex-col font-['Noto_Sans_CJK_SC',sans-serif] text-[12px] leading-none">
      <TitleBar />
      <MenuBar />
      <MainToolbar />
      <div className="flex h-[625px] shrink-0">
        <NavPanel />
        <div className="w-[1196px] flex flex-col shrink-0">
          <EditRow />
          <ComponentRow />
          <DrawRow />
          <Canvas />
          <SnapRow />
        </div>
      </div>
      <StatusBar />
      <Taskbar />
      <Overlays />
    </div>
  );
}
